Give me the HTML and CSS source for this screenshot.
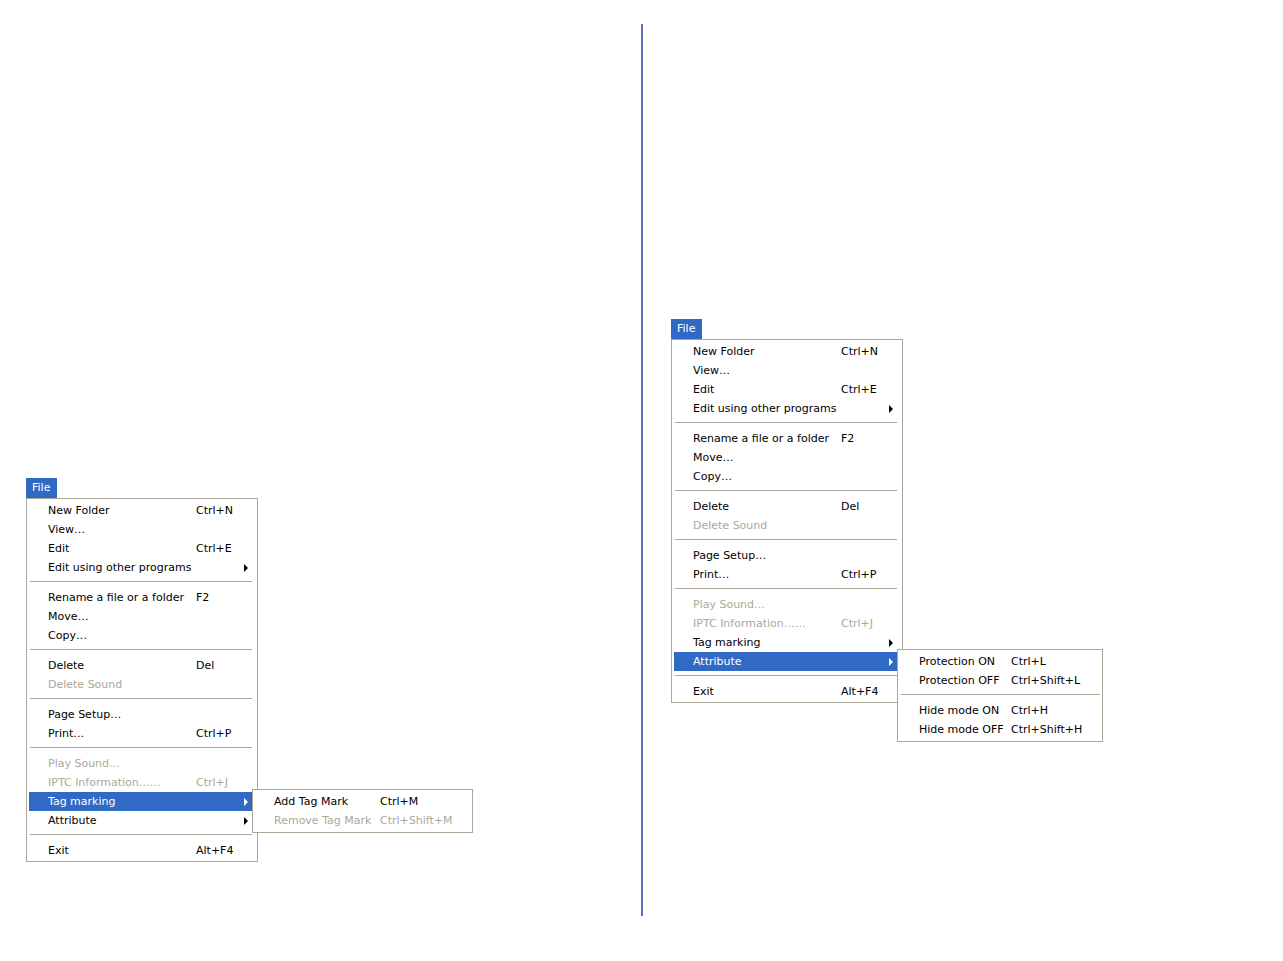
FILE: index.html
```html
<!DOCTYPE html>
<html lang="en">
<head>
    <meta charset="UTF-8">
    <title>File menu</title>
    <link rel="stylesheet" href="styles.css">
</head>
<body>
    <div class="page">
        <div class="panel panel-left">
            <div class="menu-demo">
                <div class="menu-title">File</div>
                <ul class="menu">
                    <li class="item"><span class="label">New Folder</span><span class="key">Ctrl+N</span></li>
                    <li class="item"><span class="label">View…</span><span class="key"></span></li>
                    <li class="item"><span class="label">Edit</span><span class="key">Ctrl+E</span></li>
                    <li class="item"><span class="label">Edit using other programs</span><span class="key"></span><span class="arrow"></span></li>
                    <li class="sep"></li>
                    <li class="item"><span class="label">Rename a file or a folder</span><span class="key">F2</span></li>
                    <li class="item"><span class="label">Move…</span><span class="key"></span></li>
                    <li class="item"><span class="label">Copy…</span><span class="key"></span></li>
                    <li class="sep"></li>
                    <li class="item"><span class="label">Delete</span><span class="key">Del</span></li>
                    <li class="item off"><span class="label">Delete Sound</span><span class="key"></span></li>
                    <li class="sep"></li>
                    <li class="item"><span class="label">Page Setup…</span><span class="key"></span></li>
                    <li class="item"><span class="label">Print…</span><span class="key">Ctrl+P</span></li>
                    <li class="sep"></li>
                    <li class="item off"><span class="label">Play Sound…</span><span class="key"></span></li>
                    <li class="item off"><span class="label">IPTC Information……</span><span class="key">Ctrl+J</span></li>
                    <li class="item active"><span class="label">Tag marking</span><span class="key"></span><span class="arrow"></span>
                        <ul class="menu submenu sub-tag">
                            <li class="item"><span class="label">Add Tag Mark</span><span class="key">Ctrl+M</span></li>
                            <li class="item off"><span class="label">Remove Tag Mark</span><span class="key">Ctrl+Shift+M</span></li>
                        </ul>
                    </li>
                    <li class="item"><span class="label">Attribute</span><span class="key"></span><span class="arrow"></span></li>
                    <li class="sep"></li>
                    <li class="item"><span class="label">Exit</span><span class="key">Alt+F4</span></li>
                </ul>
            </div>
        </div>

        <div class="divider"></div>

        <div class="panel panel-right">
            <div class="menu-demo">
                <div class="menu-title">File</div>
                <ul class="menu">
                    <li class="item"><span class="label">New Folder</span><span class="key">Ctrl+N</span></li>
                    <li class="item"><span class="label">View…</span><span class="key"></span></li>
                    <li class="item"><span class="label">Edit</span><span class="key">Ctrl+E</span></li>
                    <li class="item"><span class="label">Edit using other programs</span><span class="key"></span><span class="arrow"></span></li>
                    <li class="sep"></li>
                    <li class="item"><span class="label">Rename a file or a folder</span><span class="key">F2</span></li>
                    <li class="item"><span class="label">Move…</span><span class="key"></span></li>
                    <li class="item"><span class="label">Copy…</span><span class="key"></span></li>
                    <li class="sep"></li>
                    <li class="item"><span class="label">Delete</span><span class="key">Del</span></li>
                    <li class="item off"><span class="label">Delete Sound</span><span class="key"></span></li>
                    <li class="sep"></li>
                    <li class="item"><span class="label">Page Setup…</span><span class="key"></span></li>
                    <li class="item"><span class="label">Print…</span><span class="key">Ctrl+P</span></li>
                    <li class="sep"></li>
                    <li class="item off"><span class="label">Play Sound…</span><span class="key"></span></li>
                    <li class="item off"><span class="label">IPTC Information……</span><span class="key">Ctrl+J</span></li>
                    <li class="item"><span class="label">Tag marking</span><span class="key"></span><span class="arrow"></span></li>
                    <li class="item active"><span class="label">Attribute</span><span class="key"></span><span class="arrow"></span>
                        <ul class="menu submenu sub-attr">
                            <li class="item"><span class="label">Protection ON</span><span class="key">Ctrl+L</span></li>
                            <li class="item"><span class="label">Protection OFF</span><span class="key">Ctrl+Shift+L</span></li>
                            <li class="sep"></li>
                            <li class="item"><span class="label">Hide mode ON</span><span class="key">Ctrl+H</span></li>
                            <li class="item"><span class="label">Hide mode OFF</span><span class="key">Ctrl+Shift+H</span></li>
                        </ul>
                    </li>
                    <li class="sep"></li>
                    <li class="item"><span class="label">Exit</span><span class="key">Alt+F4</span></li>
                </ul>
            </div>
        </div>
    </div>
</body>
</html>
```

FILE: styles.css
```css
* {
    margin: 0;
    padding: 0;
    box-sizing: border-box;
}

body {
    background: #fff;
    font-family: 'DejaVu Sans', sans-serif;
    font-size: 11px;
    color: #000;
}

.page {
    display: flex;
    width: 1283px;
    height: 961px;
}

.panel-left {
    width: 641px;
    padding: 478px 0 0 26px;
}

.panel-right {
    flex: 1;
    padding: 319px 0 0 28px;
}

.divider {
    width: 2px;
    height: 892px;
    margin-top: 24px;
    background: #5b6fbe;
}

.menu-demo {
    width: 232px;
}

.menu-title {
    width: 31px;
    height: 20px;
    line-height: 19px;
    padding-left: 6px;
    background: #316ac5;
    color: #fff;
}

/* menu box */
.menu {
    list-style: none;
    width: 232px;
    background: #fff;
    border: 1px solid #aca899;
    padding: 2px 5px 1px 2px;
    --label-w: 148px;
}

.item {
    position: relative;
    display: grid;
    grid-template-columns: var(--label-w) 1fr 12px;
    align-items: center;
    height: 19px;
    padding-left: 19px;
    white-space: nowrap;
}

.item.off {
    color: #aca899;
}

.item.active {
    background: #316ac5;
    color: #fff;
}

.arrow {
    grid-column: 3;
    justify-self: center;
    width: 0;
    height: 0;
    border-left: 4px solid #000;
    border-top: 4px solid transparent;
    border-bottom: 4px solid transparent;
}

.item.active > .arrow {
    border-left-color: #fff;
}

.sep {
    height: 11px;
    display: flex;
    align-items: center;
    padding-left: 1px;
}

.sep::before {
    content: '';
    flex: 1;
    height: 2px;
    border-top: 1px solid #aca899;
    border-bottom: 1px solid #fff;
}

/* flyout submenus */
.submenu {
    position: absolute;
    top: -3px;
    left: 100%;
    color: #000;
    padding: 2px;
}

.sub-tag {
    width: 221px;
    --label-w: 106px;
}

.sub-attr {
    width: 206px;
    --label-w: 92px;
}

.submenu .item {
    grid-template-columns: var(--label-w) 1fr;
}
```
